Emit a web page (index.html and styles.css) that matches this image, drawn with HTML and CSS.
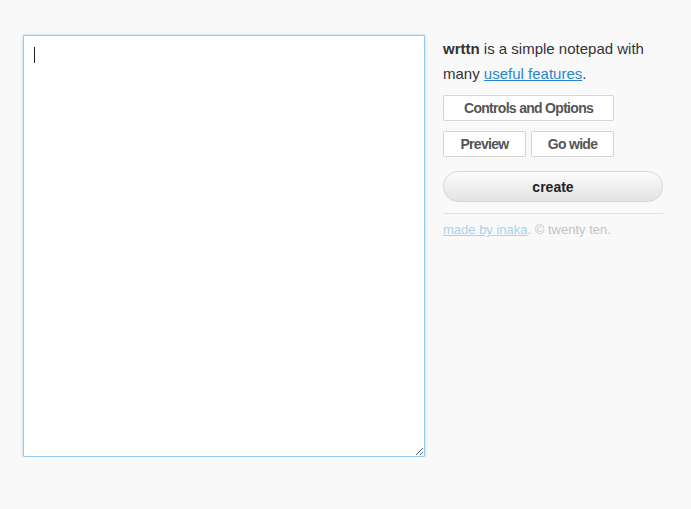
FILE: index.html
```html
<!DOCTYPE html>
<html>
<head>
    <title>wrttn</title>
    <link rel="stylesheet" href="styles.css">
</head>
<body>
    <div id="container">
        <div class="editor">
            <textarea id="pad" autofocus></textarea>
            <span class="caret"></span>
        </div>

        <div class="sidebar">
            <p class="intro"><strong>wrttn</strong> is a simple notepad with many <a href="#">useful features</a>.</p>

            <div class="row">
                <button class="btn">Controls and Options</button>
            </div>
            <div class="row">
                <button class="btn small">Preview</button>
                <button class="btn small">Go wide</button>
            </div>

            <button class="create">create</button>

            <p class="footer"><a href="#">made by inaka</a>. &copy; twenty ten.</p>
        </div>
    </div>
</body>
</html>
```

FILE: styles.css
```css
body {
    font-family: Arial, "Liberation Sans", sans-serif;
    background-color: #f9f9f9;
    margin: 0;
    padding: 0;
}

#container {
    display: flex;
    padding: 35px 0 0 23px;
    gap: 18px;
}

.editor {
    position: relative;
}

.editor textarea {
    display: block;
    box-sizing: border-box;
    width: 402px;
    height: 422px;
    padding: 10px;
    margin: 0;
    border: 1px solid #93cbf2;
    border-radius: 1px;
    box-shadow: 0 0 3px rgba(140, 195, 240, 0.7);
    background-color: #fff;
    font-family: "Liberation Sans", Arial, sans-serif;
    font-size: 14px;
    color: #333;
    outline: none;
    resize: both;
    caret-color: transparent;
}

/* fake text cursor, the screenshot caught it on */
.editor .caret {
    position: absolute;
    left: 11px;
    top: 12px;
    width: 1px;
    height: 16px;
    background-color: #222;
}

.sidebar {
    width: 220px;
    padding-top: 1px;
}

.intro {
    margin: 0 0 9px;
    font-size: 15px;
    line-height: 25px;
    color: #333;
}

.intro a {
    color: #2a86d0;
}

.row {
    display: flex;
    gap: 5px;
    margin-bottom: 10px;
}

.btn {
    box-sizing: border-box;
    height: 26px;
    padding: 0 20px;
    background-color: #fff;
    border: 1px solid #d4d4d4;
    border-radius: 2px;
    font-family: "Liberation Sans", Arial, sans-serif;
    font-size: 14px;
    font-weight: bold;
    letter-spacing: -0.7px;
    color: #555;
    cursor: pointer;
}

.btn.small {
    width: 83px;
    padding: 0;
}

.create {
    display: block;
    width: 220px;
    height: 31px;
    margin-top: 14px;
    border: 1px solid #d8d8d8;
    border-radius: 15px;
    background: linear-gradient(#fbfbfb, #e3e3e3);
    font-family: "Liberation Sans", Arial, sans-serif;
    font-size: 14px;
    font-weight: bold;
    color: #222;
    cursor: pointer;
}

.footer {
    margin: 11px 0 0;
    padding-top: 8px;
    border-top: 1px solid #e2e2e2;
    font-size: 13px;
    color: #c4c4c4;
}

.footer a {
    color: #a9d2ee;
}
```
